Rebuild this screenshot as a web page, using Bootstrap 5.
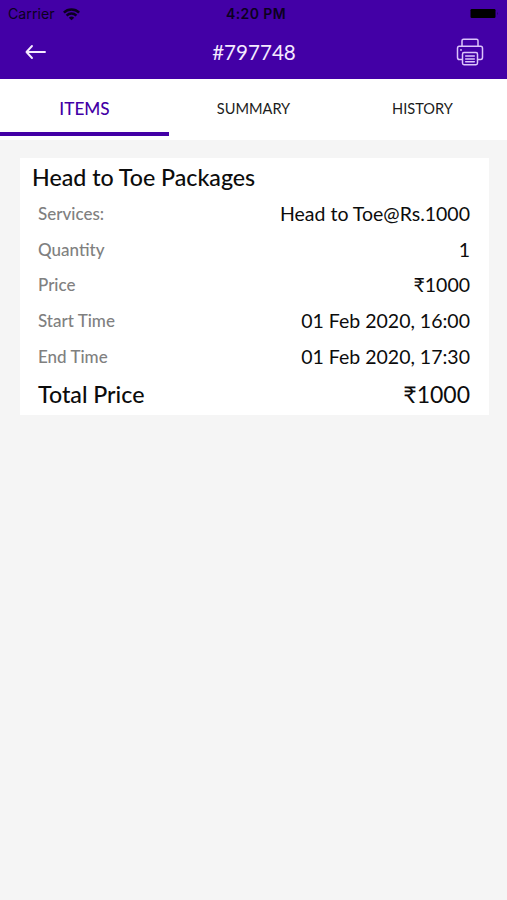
<!DOCTYPE html>
<html lang="en">
<head>
<meta charset="utf-8">
<meta name="viewport" content="width=device-width, initial-scale=1">
<title>#797748</title>
<link href="https://cdn.jsdelivr.net/npm/bootstrap@5.3.0/dist/css/bootstrap.min.css" rel="stylesheet">
<style>
body{background:#f5f5f5;color:#0c0c0c;font-family:Lato,sans-serif;line-height:1.2}
.app-header{background:#4300a6;height:79px}
.status{height:28px;padding:0 8px 0 8px;font-family:Inter,sans-serif;font-size:14.2px;color:#0b0020}
.status>*,.title-bar>*{flex:1 1 0}
.clock{font-weight:600;font-size:14px;letter-spacing:.4px;padding-left:5px}
.title-bar{height:51px;padding:0 23px 3px 24px}
.order-no{font-size:20.6px;color:#f4eaff}
.tabs{height:61px}
.tabs .nav-link{height:61px;padding:0;color:#1c1c1c;font-size:14.6px;border-radius:0}
.tabs .nav-link span{height:53px;padding-top:7px}
.tabs .nav-link.active{color:#4300a6;font-size:17.2px;font-weight:500}
.tabs .nav-link.active span{padding-top:8px}
.tabs .nav-link i{height:4px;width:100%}
.tabs .nav-link.active i{background:#4300a6}
.order{margin:18px 18px 0 20px;height:257px}
.order h1{font-size:23.2px;font-weight:500;height:38px;padding:2px 0 0 12px}
.line{height:35.8px;padding:0 19px 0 18px}
.line dt{font-size:17px;font-weight:500;color:#808080}
.line dd{font-size:19.5px;margin-top:-1px}
.line.total{height:40px}
.line.total dt{font-size:23.2px;color:#0c0c0c}
.line.total dd{font-size:23px;margin-top:0}
</style>
</head>
<body>
<header class="app-header">
  <div class="status d-flex align-items-center">
    <div class="d-flex align-items-center gap-2"><span>Carrier</span>
      <svg width="17" height="13" viewBox="0 0 17 13" fill="none" stroke="#0b0020" stroke-width="2.5"><path d="M.9 4.7a10.8 10.8 0 0 1 15.2 0M3.6 7.6a7 7 0 0 1 9.8 0"/><path d="M8.5 12.3 5.8 9.7a3.9 3.9 0 0 1 5.4 0z" fill="#0b0020" stroke="none"/></svg>
    </div>
    <div class="clock text-center">4:20 PM</div>
    <div class="d-flex justify-content-end"><svg width="30" height="12" viewBox="0 0 30 12"><rect x="1.5" y="1" width="25" height="9" rx="1.2" fill="#000"/><path d="M28.2 3.8q1.6 1.7 0 3.4z" fill="#210057"/></svg></div>
  </div>
  <div class="title-bar d-flex align-items-center">
    <div class="d-flex"><svg width="24" height="18" viewBox="0 0 24 18" fill="none" stroke="#f4eaff" stroke-width="1.9" stroke-linecap="round" stroke-linejoin="round"><path d="M21 9H2.5M8 3 2.5 9 8 15"/></svg></div>
    <div class="order-no text-center">#797748</div>
    <div class="d-flex justify-content-end"><svg width="28" height="28" viewBox="0 0 28 28" fill="none" stroke="#dcc3fb" stroke-width="1.5" stroke-linejoin="round" stroke-linecap="round"><path d="M6 8V2.7Q6 1.2 7.5 1.2h13Q22 1.2 22 2.7V8M6 21.5H3.2Q1.5 21.5 1.5 19.3V10.5Q1.5 8.3 3.2 8.3H24.8Q26.5 8.3 26.5 10.5v8.8q0 2.2-1.7 2.2H22"/><path d="M6.5 16.2Q6.5 14.5 8 14.5h12Q21.5 14.5 21.5 16.2v8.9q0 1.7-1.5 1.7H8Q6.5 26.8 6.5 25.1zM9.7 18h8.6M9.7 20.9h8.6M9.7 23.7h8.6"/><circle cx="5" cy="12" r=".3"/></svg></div>
  </div>
</header>
<nav class="tabs nav nav-fill bg-white row row-cols-3 g-0">
  <a class="nav-link active d-flex flex-column" href="#"><span class="d-flex align-items-center justify-content-center">ITEMS</span><i></i></a>
  <a class="nav-link" href="#"><span class="d-flex align-items-center justify-content-center">SUMMARY</span></a>
  <a class="nav-link" href="#"><span class="d-flex align-items-center justify-content-center">HISTORY</span></a>
</nav>
<main class="order bg-white">
  <h1 class="d-flex align-items-center mb-0">Head to Toe Packages</h1>
  <dl class="mb-0">
    <div class="line d-flex align-items-center justify-content-between"><dt>Services:</dt><dd class="mb-0">Head to Toe@Rs.1000</dd></div>
    <div class="line d-flex align-items-center justify-content-between"><dt>Quantity</dt><dd class="mb-0">1</dd></div>
    <div class="line d-flex align-items-center justify-content-between"><dt>Price</dt><dd class="mb-0">₹1000</dd></div>
    <div class="line d-flex align-items-center justify-content-between"><dt>Start Time</dt><dd class="mb-0">01 Feb 2020, 16:00</dd></div>
    <div class="line d-flex align-items-center justify-content-between"><dt>End Time</dt><dd class="mb-0">01 Feb 2020, 17:30</dd></div>
    <div class="line total d-flex align-items-center justify-content-between"><dt>Total Price</dt><dd class="mb-0">₹1000</dd></div>
  </dl>
</main>
<script src="https://cdn.jsdelivr.net/npm/bootstrap@5.3.0/dist/js/bootstrap.bundle.min.js"></script>
</body>
</html>
